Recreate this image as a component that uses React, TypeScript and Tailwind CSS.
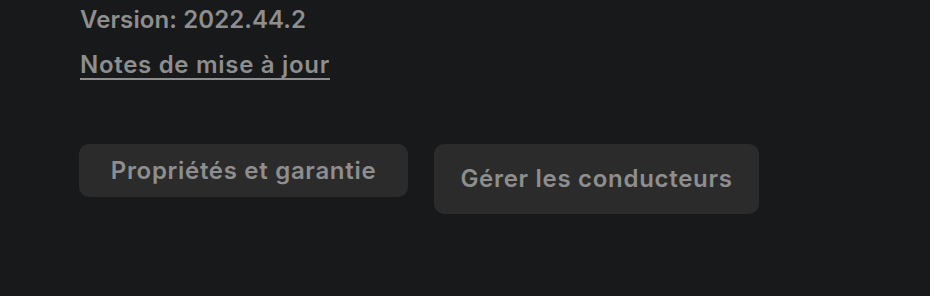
import React from 'react';

export default function App() {
  return (
    <div
      className="w-[930px] h-[296px] bg-[#18191b] pl-[80px] pt-[4px] text-[#8e8e8e]"
      style={{ fontFamily: 'Inter, "Noto Sans", sans-serif' }}
    >
      <div className="text-[24px] leading-[32px] font-semibold tracking-[0.1px]">Version: 2022.44.2</div>
      <div className="mt-[13px] text-[24px] leading-[32px] font-semibold tracking-[0.7px]">
        <a className="underline decoration-2 underline-offset-[5px] cursor-pointer">Notes de mise à jour</a>
      </div>
      <div className="mt-[63px] ml-[-1px] flex items-start gap-[26px]">
        <button className="w-[329px] h-[53px] rounded-[10px] bg-[#2b2b2c] flex items-center justify-center text-[24px] leading-[32px] font-semibold tracking-[0.7px] text-[#8e8e8e]">
          Propriétés et garantie
        </button>
        <button className="w-[325px] h-[70px] rounded-[10px] bg-[#2b2b2c] flex items-center justify-center text-[24px] leading-[32px] font-semibold tracking-[0.7px] text-[#8e8e8e]">
          Gérer les conducteurs
        </button>
      </div>
    </div>
  );
}
